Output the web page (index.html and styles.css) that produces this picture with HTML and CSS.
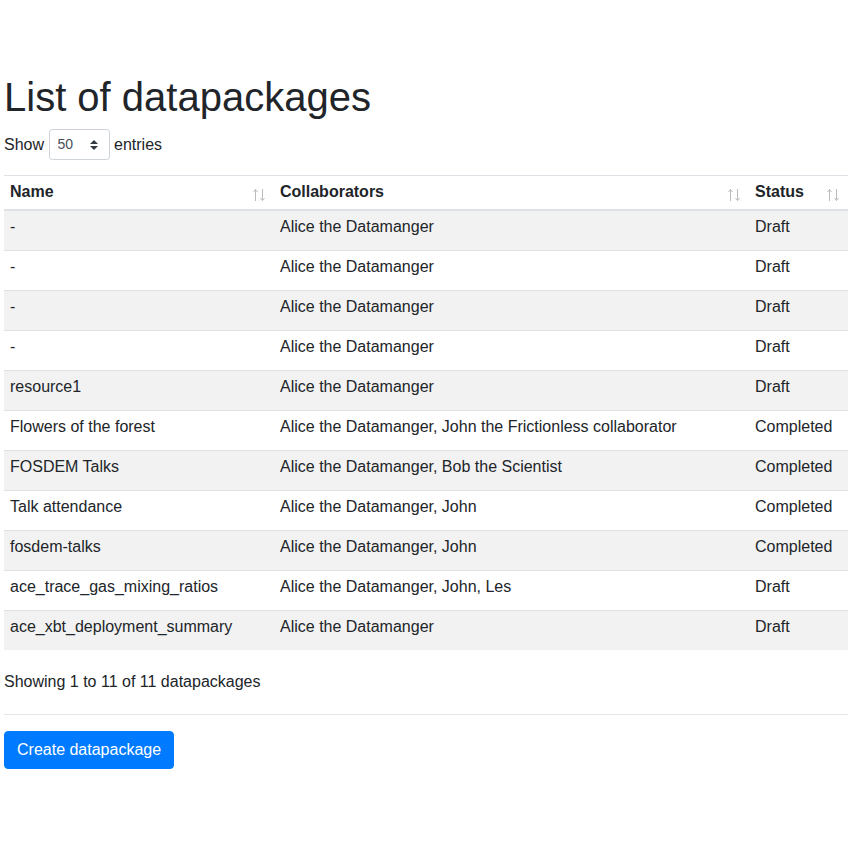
FILE: index.html
```html
<!DOCTYPE html>
<html lang="en">
<head>
<meta charset="utf-8">
<title>List of datapackages</title>
<link rel="stylesheet" href="styles.css">
</head>
<body>
<div class="page">
  <h1 class="title">List of datapackages</h1>
  <div class="length">
    <span>Show</span>
    <span class="select-wrap">
      <select class="select-sm"><option>50</option></select>
      <svg class="select-arrow" width="8" height="10" viewBox="0 0 4 5"><path d="M2 0L0 2h4zm0 5L0 3h4z" fill="#343a40"/></svg>
    </span>
    <span>entries</span>
  </div>
  <table class="dt">
    <colgroup>
      <col class="c-name"><col class="c-collab"><col class="c-status">
    </colgroup>
    <thead>
      <tr>
        <th class="sorting">Name<svg class="sort-icon" width="13" height="14" viewBox="0 0 13 14"><path d="M2.5 13V1.5M0.5 4L2.5 1.5L4.5 4" /><path d="M9.5 1V12.5M7.5 10L9.5 12.5L11.5 10" /></svg></th>
        <th class="sorting">Collaborators<svg class="sort-icon" width="13" height="14" viewBox="0 0 13 14"><path d="M2.5 13V1.5M0.5 4L2.5 1.5L4.5 4" /><path d="M9.5 1V12.5M7.5 10L9.5 12.5L11.5 10" /></svg></th>
        <th class="sorting">Status<svg class="sort-icon" width="13" height="14" viewBox="0 0 13 14"><path d="M2.5 13V1.5M0.5 4L2.5 1.5L4.5 4" /><path d="M9.5 1V12.5M7.5 10L9.5 12.5L11.5 10" /></svg></th>
      </tr>
    </thead>
    <tbody>
      <tr><td>-</td><td>Alice the Datamanger</td><td>Draft</td></tr>
      <tr><td>-</td><td>Alice the Datamanger</td><td>Draft</td></tr>
      <tr><td>-</td><td>Alice the Datamanger</td><td>Draft</td></tr>
      <tr><td>-</td><td>Alice the Datamanger</td><td>Draft</td></tr>
      <tr><td>resource1</td><td>Alice the Datamanger</td><td>Draft</td></tr>
      <tr><td>Flowers of the forest</td><td>Alice the Datamanger, John the Frictionless collaborator</td><td>Completed</td></tr>
      <tr><td>FOSDEM Talks</td><td>Alice the Datamanger, Bob the Scientist</td><td>Completed</td></tr>
      <tr><td>Talk attendance</td><td>Alice the Datamanger, John</td><td>Completed</td></tr>
      <tr><td>fosdem-talks</td><td>Alice the Datamanger, John</td><td>Completed</td></tr>
      <tr><td>ace_trace_gas_mixing_ratios</td><td>Alice the Datamanger, John, Les</td><td>Draft</td></tr>
      <tr><td>ace_xbt_deployment_summary</td><td>Alice the Datamanger</td><td>Draft</td></tr>
    </tbody>
  </table>
  <div class="info">Showing 1 to 11 of 11 datapackages</div>
  <hr class="sep">
  <button class="btn-primary" type="button">Create datapackage</button>
</div>
</body>
</html>
```
FILE: styles.css
```css
* { box-sizing: border-box; }
html, body {
  margin: 0;
  padding: 0;
  background: #fff;
}
body {
  font-family: "Liberation Sans", Arial, sans-serif;
  font-size: 16px;
  line-height: 1.5;
  color: #212529;
}
.page {
  padding: 73px 0 0 4px;
}
.title {
  margin: 0 0 8px;
  font-size: 40px;
  font-weight: 500;
  line-height: 1.2;
}
.length {
  display: flex;
  align-items: center;
  gap: 4.5px;
  height: 31px;
}
.select-wrap {
  position: relative;
  display: inline-flex;
}
.select-sm {
  appearance: none;
  -webkit-appearance: none;
  width: 61px;
  height: 31px;
  padding: 4px 28px 4px 8px;
  font-family: inherit;
  font-size: 14px;
  line-height: 1.5;
  color: #495057;
  background: #fff;
  border: 1px solid #ced4da;
  border-radius: 3.2px;
  margin: 0;
}
.select-arrow {
  position: absolute;
  right: 12px;
  top: 10.5px;
  pointer-events: none;
}
.dt {
  width: 844px;
  margin-top: 15px;
  border-collapse: collapse;
  table-layout: fixed;
}
.c-name { width: 270px; }
.c-collab { width: 475px; }
.c-status { width: 99px; }
.dt th {
  position: relative;
  text-align: left;
  font-weight: 700;
  padding: 4px 30px 5px 6px;
  border-top: 1px solid #dee2e6;
  border-bottom: 2px solid #dee2e6;
  vertical-align: bottom;
  white-space: nowrap;
}
.sort-icon {
  position: absolute;
  right: 8px;
  top: 12px;
  fill: none;
  stroke: #212529;
  stroke-width: 1;
  opacity: 0.3;
}
.dt td {
  padding: 4px 6px 11px;
  border-top: 1px solid #dee2e6;
  vertical-align: top;
  white-space: nowrap;
}
.dt tbody tr:nth-child(odd) {
  background: #f2f2f2;
}
.info {
  margin-top: 20px;
}
.sep {
  margin: 20px 0 16px;
  border: 0;
  border-top: 1px solid rgba(0, 0, 0, 0.1);
  height: 0;
}
.btn-primary {
  display: inline-block;
  height: 38px;
  padding: 6px 12px;
  font-family: inherit;
  font-size: 16px;
  line-height: 1.5;
  color: #fff;
  background: #007bff;
  border: 1px solid #007bff;
  border-radius: 4px;
  cursor: pointer;
}
```
